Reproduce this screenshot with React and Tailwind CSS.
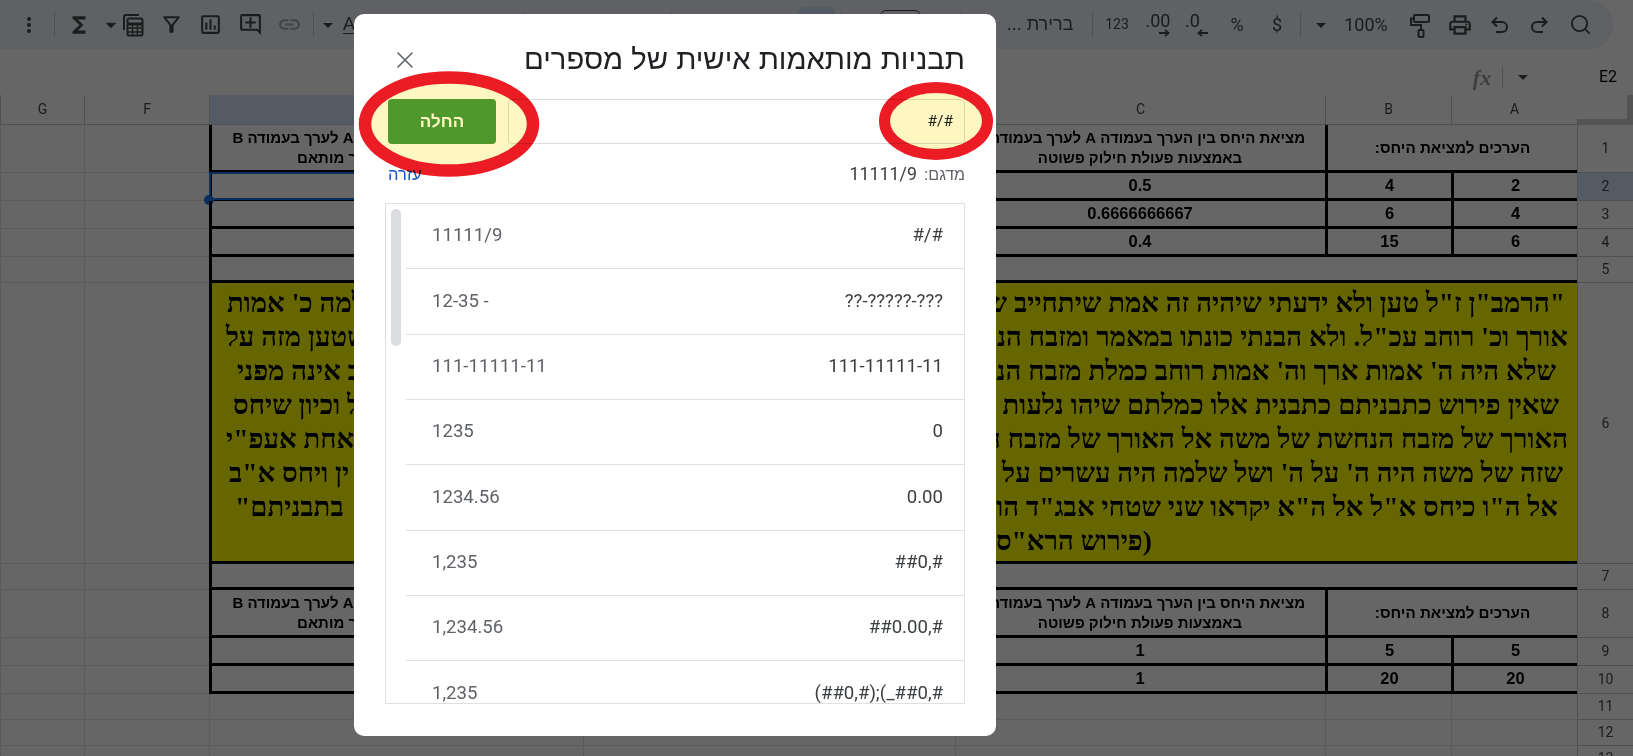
import React from "react";
import {
  MdMoreVert, MdFunctions, MdOutlineFilterAlt, MdOutlineInsertChart, MdOutlineAddComment,
  MdLink, MdArrowDropDown, MdOutlinePrint,
} from "react-icons/md";
import { X, Search } from "lucide-react";

const Sep = ({ cls }) => (
  <div className={"flex justify-center shrink-0 " + cls}>
    <div className="w-px h-[25px] bg-[#c7c7c7]" />
  </div>
);
const Slot = ({ cls, children }) => (
  <div className={"flex items-center justify-center shrink-0 text-[#444746] [&>svg]:shrink-0 " + cls}>{children}</div>
);

const CalcIcon = () => (
  <svg width="22" height="24" viewBox="0 0 22 24" fill="none" stroke="#444746" strokeWidth="2">
    <path d="M2 17V4a2 2 0 0 1 2-2h13" />
    <rect x="5.5" y="5.5" width="15" height="17" rx="1.5" />
    <path d="M5.5 11h15" strokeWidth="3" />
    <path d="M5.5 15h15M5.5 19h15M10.5 12v10M15.5 12v10" strokeWidth="1.4" />
  </svg>
);

const Arrow = ({ left }) => (
  <svg width="12" height="8" viewBox="0 0 12 8" fill="none" stroke="#444746" strokeWidth="1.8">
    {left ? <path d="M11 4H1.5M5 .8 1.5 4 5 7.2" /> : <path d="M1 4h9.5M7 .8 10.5 4 7 7.2" />}
  </svg>
);

const PaintIcon = () => (
  <svg width="24" height="26" viewBox="0 0 24 26" fill="none" stroke="#444746" strokeWidth="2">
    <rect x="6" y="3" width="15" height="7" rx="1" />
    <path d="M6 6.5H3V13h10v5" />
    <rect x="10.5" y="18" width="5" height="7" rx="1" />
  </svg>
);

const UndoIcon = () => (
  <svg width="24" height="24" viewBox="0 0 24 24" fill="none" stroke="#444746" strokeWidth="2">
    <path d="M5 9h9a5 5 0 0 1 0 10H8" />
    <path d="M9 4.5 4.5 9 9 13.5" />
  </svg>
);

const RedoIcon = () => (
  <svg width="24" height="24" viewBox="0 0 24 24" fill="none" stroke="#444746" strokeWidth="2">
    <path d="M19 9h-9a5 5 0 0 0 0 10h6" />
    <path d="M15 4.5 19.5 9 15 13.5" />
  </svg>
);

function Toolbar() {
  return (
    <div dir="ltr" className="h-[49px] mr-[20px] rounded-r-[24px] bg-[#edf2fa] flex items-center font-['Roboto',sans-serif]">
      <Slot cls="w-[52px]"><MdMoreVert size={24} className="ml-[6px]" /></Slot>
      <Sep cls="w-[4px]" />
      <Slot cls="w-[46px]"><MdFunctions size={26} /></Slot>
      <Slot cls="w-[18px]"><MdArrowDropDown size={26} /></Slot>
      <Slot cls="w-[26px]"><CalcIcon /></Slot>
      <Slot cls="w-[50px]"><MdOutlineFilterAlt size={25} /></Slot>
      <Slot cls="w-[28px]"><MdOutlineInsertChart size={25} /></Slot>
      <Slot cls="w-[52px]"><MdOutlineAddComment size={25} /></Slot>
      <Slot cls="w-[26px]"><MdLink size={25} className="text-[#a8abae]" /></Slot>
      <Sep cls="w-[22px]" />
      <Slot cls="w-[8px]"><MdArrowDropDown size={24} /></Slot>
      <Slot cls="w-[34px]">
        <span className="text-[18px] underline underline-offset-[3px] text-[#444746] font-['Liberation_Sans',sans-serif]">A</span>
      </Slot>
      <div className="w-[154px] shrink-0" />
      <Sep cls="w-[8px]" />
      <div className="w-[108px] shrink-0" />
      <Slot cls="w-[10px]"><span className="text-[18px] font-bold italic text-black">I</span></Slot>
      <div className="w-[21px] shrink-0" />
      <Sep cls="w-[8px]" />
      <div className="w-[123px] shrink-0" />
      <div className="w-[37px] h-[36px] rounded-[6px] bg-[#d3e3fd] shrink-0" />
      <div className="w-px shrink-0" />
      <Sep cls="w-[8px]" />
      <div className="w-[36px] shrink-0" />
      <div className="w-[41px] h-[30px] rounded-[6px] border border-[#444746] shrink-0" />
      <div className="w-[35px] shrink-0" />
      <Sep cls="w-[8px]" />
      <div className="w-[36px] shrink-0" />
      <Slot cls="w-[80px]"><span dir="rtl" className="text-[18px] font-['Liberation_Sans',sans-serif]">ברירת ...</span></Slot>
      <Sep cls="w-[24px]" />
      <Slot cls="w-[26px]"><span className="text-[14px]">123</span></Slot>
      <Slot cls="w-[56px]">
        <div className="flex flex-col items-center leading-none">
          <span className="text-[18px] leading-[15px]">.00</span>
          <span className="self-end mt-[1px]"><Arrow /></span>
        </div>
      </Slot>
      <Slot cls="w-[22px]">
        <div className="flex flex-col items-center leading-none">
          <span className="text-[18px] leading-[15px] self-start">.0</span>
          <span className="ml-[12px] mt-[1px]"><Arrow left /></span>
        </div>
      </Slot>
      <Slot cls="w-[58px]"><span className="text-[18px]">%</span></Slot>
      <Slot cls="w-[22px]"><span className="text-[18px]">$</span></Slot>
      <Sep cls="w-[24px]" />
      <Slot cls="w-[18px]"><MdArrowDropDown size={24} /></Slot>
      <Slot cls="w-[72px]"><span className="text-[18px]">100%</span></Slot>
      <Slot cls="w-[36px]"><PaintIcon /></Slot>
      <Slot cls="w-[44px]"><MdOutlinePrint size={26} /></Slot>
      <Slot cls="w-[36px]"><UndoIcon /></Slot>
      <Slot cls="w-[42px]"><RedoIcon /></Slot>
      <Slot cls="w-[40px]"><Search size={23} strokeWidth={1.9} /></Slot>
    </div>
  );
}

function FormulaBar() {
  return (
    <div dir="ltr" className="h-[46px] flex items-end justify-end">
      <div className="h-[36px] flex items-center">
        <span className="w-[40px] text-center text-[22px] font-bold italic text-[#9c9c9c] font-['Liberation_Serif',serif]">fx</span>
        <div className="w-px h-[21px] bg-[#c7c7c7]" />
        <div className="w-[40px] flex justify-center text-[#444746]"><MdArrowDropDown size={24} /></div>
        <div className="w-[40px]" />
        <span className="w-[50px] text-center text-[16px] text-black font-['Roboto',sans-serif]">E2</span>
      </div>
    </div>
  );
}

const head = "border-b border-l border-[#c7c7c7] text-[#444746] text-[14px] flex items-center justify-center font-['Roboto',sans-serif]";
const grid = "border-b border-l border-[#e1e3e1]";
const thick = "border-b-[3px] border-black";
const bold = "flex items-center justify-center text-center font-bold text-black font-['Liberation_Sans',sans-serif]";

const ColHeads = () => (
  <>
    <div className="border-b-[6px] border-r-[6px] border-[#d0d0d0]" />
    <div className={head}>A</div>
    <div className={head}>B</div>
    <div className={head}>C</div>
    <div className={head}>D</div>
    <div className={head + " bg-[#d3e3fd]"}>E</div>
    <div className={head}>F</div>
    <div className={head}>G</div>
  </>
);

const Outer = () => (
  <>
    <div className={grid} />
    <div className={grid} />
  </>
);

const RowNum = ({ n, sel }) => <div className={head + (sel ? " bg-[#d3e3fd]" : "")}>{n}</div>;

const HEAD_C = <span>מציאת היחס בין הערך בעמודה A לערך בעמודה B<br />באמצעות פעולת חילוק פשוטה</span>;
const HEAD_E = <span>מציאת היחס בין הערך בעמודה A לערך בעמודה B<br />באמצעות עיצוב מספר מותאם</span>;

function TableHeadRow({ n }) {
  return (
    <>
      <RowNum n={n} />
      <div className={"col-span-2 text-[15.2px] pt-[1px] " + bold + " " + thick + " border-l-[3px]"}>הערכים למציאת היחס:</div>
      <div className={"text-[15px] leading-[20px] pt-[1px] whitespace-nowrap " + bold + " " + thick}>{HEAD_C}</div>
      <div className={thick} />
      <div className={"text-[15px] leading-[20px] pt-[1px] whitespace-nowrap " + bold + " " + thick + " border-l-[3px]"}>{HEAD_E}</div>
      <Outer />
    </>
  );
}

function NumRow({ n, a, b, c, sel }) {
  return (
    <>
      <RowNum n={n} sel={sel} />
      <div className={"text-[16.5px] " + bold + " " + thick + " border-l-[3px]"}>{a}</div>
      <div className={"text-[16.5px] " + bold + " " + thick + " border-l-[3px]"}>{b}</div>
      <div className={"text-[16.5px] " + bold + " " + thick}>{c}</div>
      <div className={thick} />
      <div className={"relative " + thick + " border-l-[3px]"}>
        {sel && (
          <>
            <div className="absolute left-[-3px] right-0 top-[-1px] bottom-[-2px] border-2 border-[#1a73e8]" />
            <div className="absolute left-[-8px] bottom-[-7px] w-[10px] h-[10px] rounded-full bg-[#1a73e8]" />
          </>
        )}
      </div>
      <Outer />
    </>
  );
}

function GapRow({ n }) {
  return (
    <>
      <RowNum n={n} />
      <div className={"col-span-4 " + thick} />
      <div className={thick + " border-l-[3px]"} />
      <Outer />
    </>
  );
}

function EmptyRow({ n }) {
  return (
    <>
      <RowNum n={n} />
      {[0, 1, 2, 3, 4, 5, 6].map((i) => <div key={i} className={grid} />)}
    </>
  );
}

const RASHI = [
  { r: "\"הרמב\"ן ז\"ל טען ולא ידעתי שיהיה זה אמת שיתחייב של", l: "שלמה כ' אמות", c: "pr-[12px] pl-[15px]" },
  { r: "אורך וכ' רוחב עכ\"ל. ולא הבנתי כונתו במאמר ומזבח הנ", l: "שטען מזה על", c: "pr-[9px] pl-[14px]" },
  { r: "שלא היה ה' אמות ארך וה' אמות רוחב כמלת מזבח הנח", l: "ב אינה מפני", c: "pr-[21px] pl-[25px]" },
  { r: "שאין פירוש כתבניתם כתבנית אלו כמלתם שיהו נלעות של", l: "ל וכיון שיחס", c: "pr-[18px] pl-[21px]" },
  { r: "האורך של מזבח הנחשת של משה אל האורך של מזבח הנ", l: "אחת אעפ\"י", c: "pr-[9px] pl-[14px]" },
  { r: "שזה של משה היה ה' על ה' ושל שלמה היה עשרים על עש", l: "ין ויחס א\"ב", c: "pr-[14px] pl-[17px]" },
  { r: "אל ה\"ו כיחס א\"ל אל ה\"א יקראו שני שטחי אבג\"ד הוז", l: "בתבניתם\"", c: "pr-[19px] pl-[23px]" },
  { r: "(פירוש הרא\"ס", l: "", c: "pr-[425px]" },
];

function YellowRow() {
  return (
    <>
      <RowNum n={6} />
      <div className={"col-span-5 bg-[#ffff00] border-l-[3px] flex flex-col justify-center text-black font-bold text-[27.5px] leading-[34px] font-['Liberation_Serif',serif] " + thick}>
        {RASHI.map((line, i) => (
          <div key={i} className={"flex justify-between whitespace-nowrap " + line.c}>
            <span>{line.r}</span>
            <span>{line.l}</span>
          </div>
        ))}
      </div>
      <Outer />
    </>
  );
}

function Sheet() {
  return (
    <div
      dir="rtl"
      className="grid grid-cols-[56px_126px_126px_370px_372px_374px_125px_84px] grid-rows-[30px_48px_28px_28px_28px_26px_281px_26px_48px_28px_28px_26px_26px_26px]"
    >
      <ColHeads />
      <TableHeadRow n={1} />
      <NumRow n={2} a="2" b="4" c="0.5" sel />
      <NumRow n={3} a="4" b="6" c="0.6666666667" />
      <NumRow n={4} a="6" b="15" c="0.4" />
      <GapRow n={5} />
      <YellowRow />
      <GapRow n={7} />
      <TableHeadRow n={8} />
      <NumRow n={9} a="5" b="5" c="1" />
      <NumRow n={10} a="20" b="20" c="1" />
      <EmptyRow n={11} />
      <EmptyRow n={12} />
      <EmptyRow n={13} />
    </div>
  );
}

const FORMATS = [
  ["#/#", "11111/9"],
  ["??-?????-???", "12-35 -"],
  ["111-11111-11", "111-11111-11"],
  ["0", "1235"],
  ["0.00", "1234.56"],
  ["##0,#", "1,235"],
  ["##0.00,#", "1,234.56"],
  ["(##0,#);(_##0,#", "1,235"],
];

const LTR = ({ children, cls }) => (
  <span dir="ltr" className={"[unicode-bidi:bidi-override] " + cls}>{children}</span>
);

function Modal() {
  return (
    <div dir="rtl" className="absolute left-[354px] top-[14px] w-[642px] h-[722px] bg-white rounded-[10px] pr-[31px] pl-[34px] pb-[32px] flex flex-col font-['Roboto','Liberation_Sans',sans-serif]">
      <div className="h-[85px] pt-[14px] shrink-0">
        <div className="h-[64px] flex items-center justify-between">
          <h1 className="text-[29.2px] font-normal text-[#202124] font-['Liberation_Sans',sans-serif]">תבניות מותאמות אישית של מספרים</h1>
          <X size={28} strokeWidth={1.3} className="text-[#5f6368] ml-[3px]" />
        </div>
      </div>
      <div className="flex gap-[12px] h-[45px] shrink-0">
        <div className="flex-1 border border-[#dadce0] rounded-[4px] flex items-center pr-[11px] pl-[11px]">
          <LTR cls="text-[15.5px] text-[#202124]">#/#</LTR>
        </div>
        <button className="w-[108px] rounded-[4px] bg-[#4f9e3a] text-white font-bold text-[17px] font-['Liberation_Sans',sans-serif]">החלה</button>
      </div>
      <div className="h-[59px] pt-[2px] shrink-0 flex items-center justify-between">
        <div className="flex items-center gap-[7px] text-[#5f6368]">
          <span className="text-[16px] font-['Liberation_Sans',sans-serif]">מדגם:</span>
          <LTR cls="text-[17.8px] text-[#3c4043]">11111/9</LTR>
        </div>
        <a className="text-[16.5px] text-[#1155cc] font-['Liberation_Sans',sans-serif]">עזרה</a>
      </div>
      <div className="relative flex-1 min-h-0 ml-[-3px] border border-[#e0e0e0] overflow-hidden">
        <div className="ml-[20px]">
          {FORMATS.map(([f, s], i) => (
            <div key={i} className="h-[65.35px] border-b border-[#e0e0e0] flex items-center justify-between pr-[21px] pl-[26px] text-[18.6px]">
              <LTR cls="text-[#3c4043]">{f}</LTR>
              <LTR cls="text-[#5f6368]">{s}</LTR>
            </div>
          ))}
        </div>
        <div className="absolute left-[5px] top-[5px] w-[10px] h-[137px] rounded-[5px] bg-[#dadce0]" />
      </div>
    </div>
  );
}

const Highlights = () => (
  <svg className="absolute inset-0 mix-blend-multiply pointer-events-none" width="1633" height="756" viewBox="0 0 1633 756" fill="#fff7c2" stroke="#ec1c24">
    <ellipse cx="449" cy="124" rx="84" ry="46.5" strokeWidth="12.5" />
    <ellipse cx="936" cy="121" rx="51.5" ry="33.5" strokeWidth="11" />
  </svg>
);

export default function App() {
  return (
    <div className="relative w-[1633px] h-[756px] overflow-hidden bg-white">
      <Toolbar />
      <FormulaBar />
      <Sheet />
      <div className="absolute inset-0 bg-black/60" />
      <Modal />
      <Highlights />
    </div>
  );
}
